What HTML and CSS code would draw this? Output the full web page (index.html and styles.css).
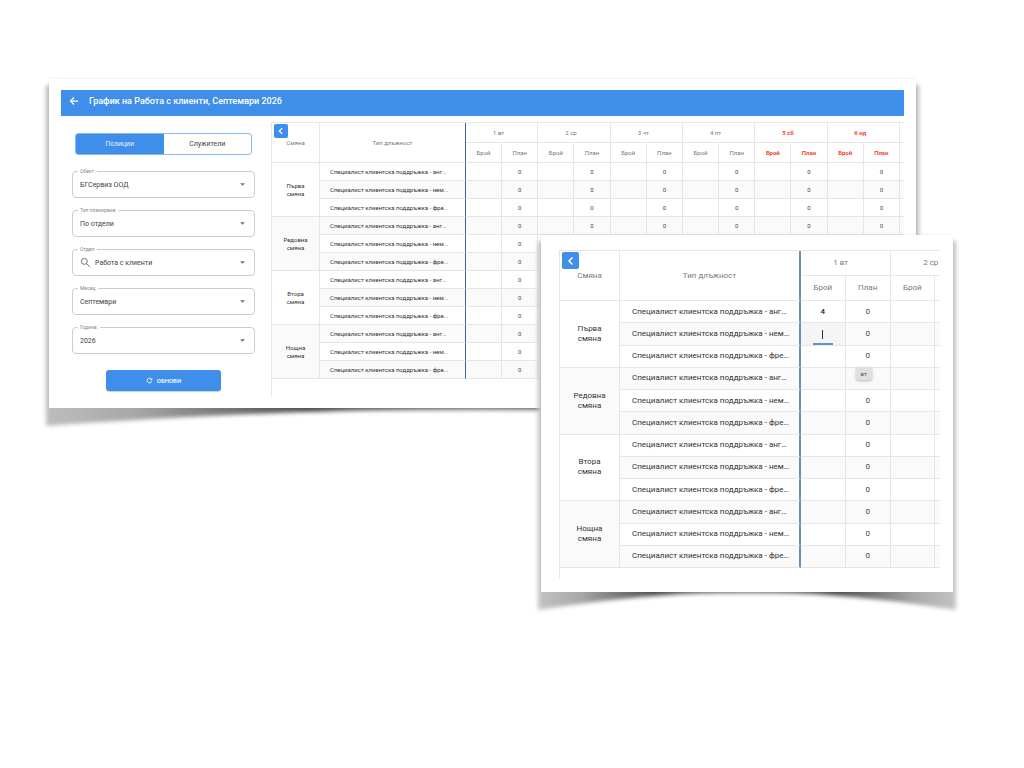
FILE: index.html
```html
<!DOCTYPE html>
<html lang="bg">
<head>
<meta charset="utf-8">
<title>График на Работа с клиенти</title>
<link rel="stylesheet" href="styles.css">
</head>
<body>
<main class="stage">
<section class="sheet sheet-main">
  <svg class="shadow" viewBox="0 0 879 359" preserveAspectRatio="none" aria-hidden="true">
    <defs><linearGradient id="g1"><stop offset="0" stop-color="#bdbdbd"/><stop offset=".1" stop-color="#a8a8a8"/><stop offset=".3" stop-color="#4c4c4c"/><stop offset=".5" stop-color="#777"/><stop offset=".7" stop-color="#4c4c4c"/><stop offset=".9" stop-color="#a8a8a8"/><stop offset="1" stop-color="#bdbdbd"/></linearGradient></defs>
    <path fill="url(#g1)" d="M3 6H876V347Q650 331 500 331H379Q229 331 3 347Z"/>
  </svg>
  <div class="paper">
    <header class="bar">
      <button class="back" aria-label="Назад"><svg viewBox="0 0 24 24"><path d="M22 12H4M12 3.500L3.500 12l8.500 8.500"/></svg></button>
      <h1>График на Работа с клиенти, Септември 2026</h1>
    </header>
    <div class="content">
      <form class="filters">
        <div class="toggle"><button type="button" class="on">Позиции</button><button type="button">Служители</button></div>
        <div class="fields">
          <div class="field"><label for="f1">Обект:</label><select id="f1"><option>БГСервиз ООД</option></select><svg class="caret" viewBox="0 0 10 5"><path d="M0 0h10L5 5z"/></svg></div>
          <div class="field"><label for="f2">Тип планиране:</label><select id="f2"><option>По отдели</option></select><svg class="caret" viewBox="0 0 10 5"><path d="M0 0h10L5 5z"/></svg></div>
          <div class="field search"><label for="f3">Отдел:</label><svg class="lens" viewBox="0 0 24 24"><circle cx="9.500" cy="9.500" r="6.500"/><path d="M14.500 14.500L21.500 21.500"/></svg><select id="f3"><option>Работа с клиенти</option></select><svg class="caret" viewBox="0 0 10 5"><path d="M0 0h10L5 5z"/></svg></div>
          <div class="field"><label for="f4">Месец:</label><select id="f4"><option>Септември</option></select><svg class="caret" viewBox="0 0 10 5"><path d="M0 0h10L5 5z"/></svg></div>
          <div class="field"><label for="f5">Година:</label><select id="f5"><option>2026</option></select><svg class="caret" viewBox="0 0 10 5"><path d="M0 0h10L5 5z"/></svg></div>
        </div>
        <button type="button" class="refresh"><svg viewBox="0 0 24 24"><path d="M19.500 14.500A8 8 0 1 1 17.500 6.500L20 9"/><path class="tip" d="M21.500 3v8h-8z"/></svg>ОБНОВИ</button>
      </form>
      <div class="grid">
        <button class="collapse" aria-label="Скрий"><svg viewBox="0 0 24 24"><path d="M15 5l-7 7 7 7"/></svg></button>
        <table>
          <colgroup><col class="c-shift"><col class="c-type"><col span="12"><col class="c-rest"></colgroup>
          <thead>
            <tr><th rowspan="2">Смяна</th><th rowspan="2" class="type">Тип длъжност</th><th colspan="2" class="day">1 вт</th><th colspan="2" class="day">2 ср</th><th colspan="2" class="day">3 чт</th><th colspan="2" class="day">4 пт</th><th colspan="2" class="day off">5 сб</th><th colspan="2" class="day off">6 нд</th><th></th></tr>
            <tr><th>Брой</th><th>План</th><th>Брой</th><th>План</th><th>Брой</th><th>План</th><th>Брой</th><th>План</th><th class="off">Брой</th><th class="off">План</th><th class="off">Брой</th><th class="off">План</th><th></th></tr>
          </thead>
          <tbody>
            <tr><th rowspan="3">Първа<br>смяна</th><td class="type">Специалист клиентска поддръжка - анг...</td><td><td>0<td><td>0<td><td>0<td><td>0<td><td>0<td><td>0<td></tr>
            <tr><td class="type">Специалист клиентска поддръжка - нем...</td><td><td>0<td><td>0<td><td>0<td><td>0<td><td>0<td><td>0<td></tr>
            <tr><td class="type">Специалист клиентска поддръжка - фре...</td><td><td>0<td><td>0<td><td>0<td><td>0<td><td>0<td><td>0<td></tr>
            <tr><th rowspan="3">Редовна<br>смяна</th><td class="type">Специалист клиентска поддръжка - анг...</td><td><td>0<td><td>0<td><td>0<td><td>0<td><td>0<td><td>0<td></tr>
            <tr><td class="type">Специалист клиентска поддръжка - нем...</td><td><td>0<td><td><td><td><td><td><td><td><td><td><td></tr>
            <tr><td class="type">Специалист клиентска поддръжка - фре...</td><td><td>0<td><td><td><td><td><td><td><td><td><td><td></tr>
            <tr><th rowspan="3">Втора<br>смяна</th><td class="type">Специалист клиентска поддръжка - анг...</td><td><td>0<td><td><td><td><td><td><td><td><td><td><td></tr>
            <tr><td class="type">Специалист клиентска поддръжка - нем...</td><td><td>0<td><td><td><td><td><td><td><td><td><td><td></tr>
            <tr><td class="type">Специалист клиентска поддръжка - фре...</td><td><td>0<td><td><td><td><td><td><td><td><td><td><td></tr>
            <tr><th rowspan="3">Нощна<br>смяна</th><td class="type">Специалист клиентска поддръжка - анг...</td><td><td>0<td><td><td><td><td><td><td><td><td><td><td></tr>
            <tr><td class="type">Специалист клиентска поддръжка - нем...</td><td><td>0<td><td><td><td><td><td><td><td><td><td><td></tr>
            <tr><td class="type">Специалист клиентска поддръжка - фре...</td><td><td>0<td><td><td><td><td><td><td><td><td><td><td></tr>
          </tbody>
        </table>
      </div>
    </div>
  </div>
</section>

<section class="sheet sheet-detail">
  <svg class="shadow" viewBox="0 0 424 386" preserveAspectRatio="none" aria-hidden="true">
    <defs><linearGradient id="g2"><stop offset="0" stop-color="#c4c4c4"/><stop offset=".1" stop-color="#a8a8a8"/><stop offset=".28" stop-color="#4c4c4c"/><stop offset=".5" stop-color="#666"/><stop offset=".72" stop-color="#4c4c4c"/><stop offset=".9" stop-color="#a8a8a8"/><stop offset="1" stop-color="#c4c4c4"/></linearGradient></defs>
    <path fill="url(#g2)" d="M3 6H421V374Q312 357 240 357H184Q112 357 3 374Z"/>
  </svg>
  <div class="paper">
    <div class="grid">
      <button class="collapse" aria-label="Скрий"><svg viewBox="0 0 24 24"><path d="M15 5l-7 7 7 7"/></svg></button>
      <table>
        <colgroup><col class="c-shift"><col class="c-type"><col span="4"></colgroup>
        <thead>
          <tr><th rowspan="2">Смяна</th><th rowspan="2" class="type">Тип длъжност</th><th colspan="2" class="day">1 вт</th><th colspan="2" class="day">2 ср</th></tr>
          <tr><th>Брой</th><th>План</th><th>Брой</th><th></th></tr>
        </thead>
        <tbody>
          <tr><th rowspan="3">Първа<br>смяна</th><td class="type">Специалист клиентска поддръжка - анг…</td><td><input aria-label="Брой, английски" value="4"></td><td>0<td><td></tr>
          <tr><td class="type">Специалист клиентска поддръжка - нем…</td><td class="editing"><input aria-label="Брой, немски" value=""></td><td>0<td><td></tr>
          <tr><td class="type">Специалист клиентска поддръжка - фре…</td><td><td>0<td><td></tr>
          <tr><th rowspan="3">Редовна<br>смяна</th><td class="type">Специалист клиентска поддръжка - анг…</td><td><td class="tipped">0<span class="tooltip" role="tooltip">вт</span></td><td><td></tr>
          <tr><td class="type">Специалист клиентска поддръжка - нем…</td><td><td>0<td><td></tr>
          <tr><td class="type">Специалист клиентска поддръжка - фре…</td><td><td>0<td><td></tr>
          <tr><th rowspan="3">Втора<br>смяна</th><td class="type">Специалист клиентска поддръжка - анг…</td><td><td>0<td><td></tr>
          <tr><td class="type">Специалист клиентска поддръжка - нем…</td><td><td>0<td><td></tr>
          <tr><td class="type">Специалист клиентска поддръжка - фре…</td><td><td>0<td><td></tr>
          <tr><th rowspan="3">Нощна<br>смяна</th><td class="type">Специалист клиентска поддръжка - анг…</td><td><td>0<td><td></tr>
          <tr><td class="type">Специалист клиентска поддръжка - нем…</td><td><td>0<td><td></tr>
          <tr><td class="type">Специалист клиентска поддръжка - фре…</td><td><td>0<td><td></tr>
        </tbody>
      </table>
    </div>
  </div>
</section>
</main>
</body>
</html>
```

FILE: styles.css
```css
* { box-sizing: border-box; }
body { margin: 0; background: #fff; font-family: Roboto, "Noto Sans", sans-serif; color: #444; }
button, input, select { font: inherit; color: inherit; margin: 0; padding: 0; border: 0; background: none; }
svg { display: block; fill: none; stroke: currentColor; stroke-width: 2; }

.stage { position: relative; min-height: 100vh; padding: 79px 108px 0 49px; }
.sheet { position: relative; }
.shadow { position: absolute; left: -6px; top: 0; width: calc(100% + 12px); height: calc(100% + 30px); stroke: none; filter: blur(2px); }
.paper { position: relative; background: #fff; box-shadow: 0 -1px 2px #00000010; }
.sheet-main .paper { padding: 11px 12px 12px; }
.sheet-detail { position: absolute; left: 541px; top: 235px; width: 412px; }
.sheet-detail .paper { padding: 15px 13px 13px 18px; }

.bar { display: flex; align-items: center; gap: 10px; height: 26px; padding: 0 8px 5px; background: #3e8eea; color: #fff; }
.back { width: 10px; height: 10px; }
.back svg { width: 10px; height: 10px; stroke-width: 3; }
.bar h1 { margin: 0; font-size: 9px; font-weight: 500; line-height: 12px; }

.content { display: flex; padding-top: 6px; }
.filters { flex: 0 0 210px; display: flex; flex-direction: column; padding: 11px 16px 0 11px; font-size: 7px; }
.toggle { display: flex; height: 22px; margin: 0 3px; border: 1px solid #8ab9f2; border-radius: 3px; overflow: hidden; }
.toggle button { flex: 1; }
.toggle .on { background: #3e8eea; color: #e0edfc; }
.fields { display: flex; flex-direction: column; gap: 12px; margin-top: 16px; }
.field { position: relative; display: flex; align-items: center; height: 27px; border: 1px solid #ccc; border-radius: 4px; padding: 0 8px 0 7px; }
.field label { position: absolute; left: 5px; top: -4px; padding: 0 2px; background: #fff; color: #888; font-size: 5px; line-height: 6px; }
.field select { flex: 1; min-width: 0; height: 20px; appearance: none; outline: 0; }
.search { gap: 4px; }
.lens { width: 11px; height: 11px; color: #666; }
.caret { width: 5px; height: 3px; fill: #757575; stroke: none; margin-right: 1px; }
.refresh { display: flex; align-items: center; justify-content: center; gap: 4px; width: 115px; height: 21px; margin: 16px auto 0; border-radius: 3px; background: #3e8eea; color: #fff; font-size: 6px; font-weight: 500; box-shadow: 0 1px 1px #0003; }
.refresh svg { width: 7px; height: 7px; stroke-width: 3; }
.refresh .tip { fill: currentColor; stroke: none; }

.grid { position: relative; flex: 1; min-width: 0; overflow: hidden; border-left: 1px solid #e6e6e6; padding-bottom: 17px; font-size: 6px; line-height: 8px; }
table { width: 100%; table-layout: fixed; border-collapse: separate; border-spacing: 0; border-top: 1px solid #e6e6e6; }
th, td { padding: 0; border: solid #e6e6e6; border-width: 0 1px 1px 0; text-align: center; vertical-align: middle; font-weight: 400; white-space: nowrap; }
thead th { color: #777; height: 20px; }
thead .day { padding-right: 6px; }
thead .off { color: #f44336; font-weight: 700; }
td { height: 18px; }
tbody tr:nth-child(even) td, tbody tr:nth-child(6n+4) th { background: #fafafa; }
tr > :last-child { border-right: 0; }
tbody th, tbody td.type { color: #333; }
td.type { padding-left: 10px; text-align: left; }
tr > .type { border-right: 1px solid #3468a2; }
.c-shift { width: 48px; }
.c-type { width: 146px; }
.c-rest { width: 4px; }
.collapse { position: absolute; left: 2px; top: 2px; display: grid; place-items: center; width: 14px; height: 14px; border-radius: 2px; background: #3e8eea; color: #fff; }
.collapse svg { width: 10px; height: 10px; stroke-width: 3; }

.sheet-detail .grid { padding-bottom: 11px; font-size: 8px; line-height: 10px; }
.sheet-detail table { width: 420px; height: 318px; }
.sheet-detail thead th { height: 25px; }
.sheet-detail td { height: 22px; }
.sheet-detail .c-shift { width: 60px; }
.sheet-detail .c-type { width: 181px; }
.sheet-detail td.type { padding-left: 12px; }
.sheet-detail tr > .type { border-right: 2px solid #6490bf; }
.sheet-detail thead .day { padding-right: 9px; }
.sheet-detail .collapse { width: 17px; height: 17px; }
.sheet-detail .collapse svg { width: 12px; height: 12px; }
.sheet-detail input { display: block; width: 20px; height: 18px; margin: 0 auto; text-align: center; font-weight: 500; color: #222; outline: 0; }
.sheet-detail td.editing { background: #f5f5f5; vertical-align: bottom; }
.editing input { border-bottom: 2px solid #6490d0; background: linear-gradient(#333, #333) center / 1px 9px no-repeat; }
.tipped { position: relative; }
.tooltip { position: absolute; left: 10px; top: -1px; width: 16px; height: 13px; border-radius: 2px; background: #e0e0e0; color: #555; font-size: 6px; line-height: 13px; box-shadow: 0 1px 3px #0004; }
```
